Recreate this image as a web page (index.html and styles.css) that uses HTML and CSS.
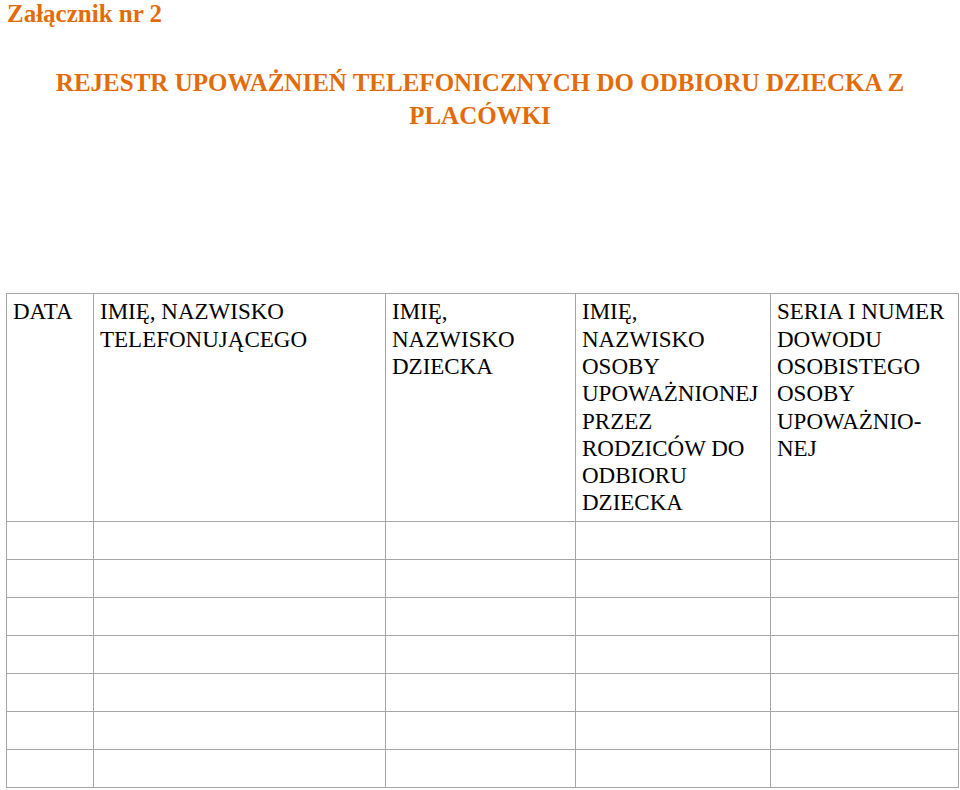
FILE: index.html
```html
<!DOCTYPE html>
<html lang="pl">
<head>
<meta charset="utf-8">
<title>Załącznik nr 2</title>
<link rel="stylesheet" href="styles.css">
</head>
<body>
<p class="annex">Załącznik nr 2</p>
<h1 class="title">REJESTR UPOWAŻNIEŃ TELEFONICZNYCH DO ODBIORU DZIECKA Z PLACÓWKI</h1>
<table class="register">
  <colgroup>
    <col class="c1"><col class="c2"><col class="c3"><col class="c4"><col class="c5">
  </colgroup>
  <thead>
    <tr class="head">
      <th>DATA</th>
      <th>IMIĘ, NAZWISKO TELEFONUJĄCEGO</th>
      <th>IMIĘ, NAZWISKO DZIECKA</th>
      <th>IMIĘ, NAZWISKO OSOBY UPOWAŻNIONEJ PRZEZ RODZICÓW DO ODBIORU DZIECKA</th>
      <th>SERIA I NUMER DOWODU OSOBISTEGO OSOBY UPOWAŻNIO-NEJ</th>
    </tr>
  </thead>
  <tbody>
    <tr><td></td><td></td><td></td><td></td><td></td></tr>
    <tr><td></td><td></td><td></td><td></td><td></td></tr>
    <tr><td></td><td></td><td></td><td></td><td></td></tr>
    <tr><td></td><td></td><td></td><td></td><td></td></tr>
    <tr><td></td><td></td><td></td><td></td><td></td></tr>
    <tr><td></td><td></td><td></td><td></td><td></td></tr>
    <tr><td></td><td></td><td></td><td></td><td></td></tr>
  </tbody>
</table>
</body>
</html>
```

FILE: styles.css
```css
html, body {
  margin: 0;
  padding: 0;
  background: #ffffff;
}
body {
  padding: 0 0 0 7px;
  font-family: "Liberation Serif", "Times New Roman", Tinos, "Noto Serif", "Nimbus Roman", FreeSerif, "DejaVu Serif", serif;
  color: #000;
  width: 953px;
}
.annex {
  margin: 0;
  font-size: 25px;
  line-height: 28px;
  font-weight: bold;
  color: #e36c0a;
}
.title {
  margin: 39px 0 0 -7px;
  width: 960px;
  text-align: center;
  font-size: 25px;
  line-height: 32.7px;
  font-weight: bold;
  color: #e36c0a;
}
.register {
  margin: 161px 0 0 -1px;
  border-collapse: collapse;
  table-layout: fixed;
  width: 952px;
  font-family: inherit;
}
.c1 { width: 87px; }
.c2 { width: 292px; }
.c3 { width: 190px; }
.c4 { width: 195px; }
.c5 { width: 188px; }
.register th,
.register td {
  border: 1px solid #a6a6a6;
  padding: 4px 6px 0 6px;
  vertical-align: top;
  text-align: left;
  font-family: inherit;
  font-weight: normal;
  font-size: 23px;
  line-height: 27.3px;
}
.head th { height: 223px; }
.register td { height: 33px; }
```
